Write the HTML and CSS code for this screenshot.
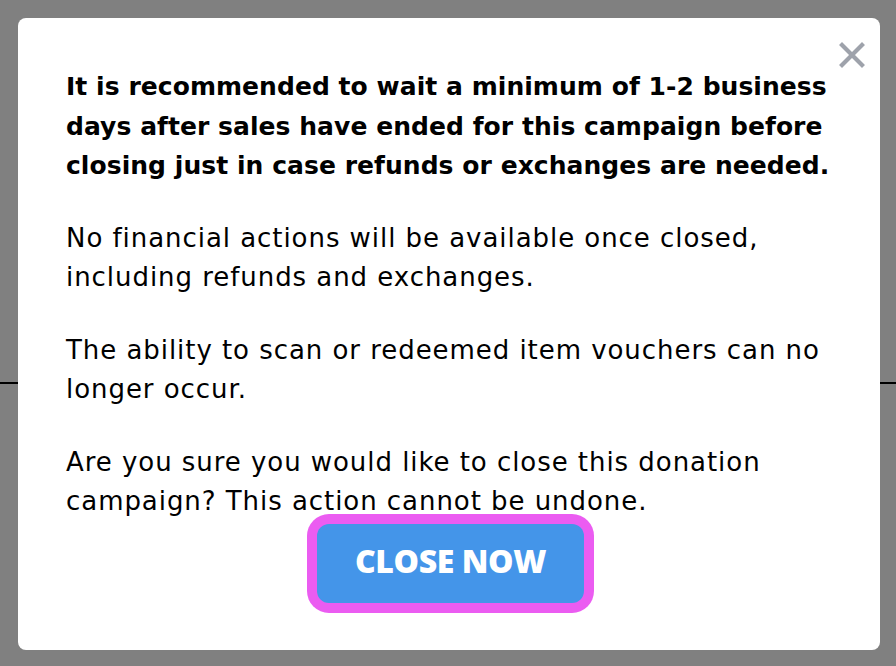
FILE: index.html
```html
<!DOCTYPE html>
<html lang="en">
<head>
  <meta charset="UTF-8" />
  <meta name="viewport" content="width=device-width, initial-scale=1.0"/>
  <title>Close Campaign</title>
  <link rel="stylesheet" href="styles.css">
</head>
<body>

  <!-- Page behind the dialog -->
  <div class="page">
    <div class="page-rule"></div>
  </div>

  <!-- Confirm dialog -->
  <div class="overlay">
    <div class="modal">
      <button class="modal-close" aria-label="Close">
        <svg width="26" height="26" viewBox="0 0 26 26">
          <path d="M3 3 L23 23 M23 3 L3 23" stroke="#9ea2ab" stroke-width="4.2" stroke-linecap="square" fill="none"/>
        </svg>
      </button>

      <p class="lead">It is recommended to wait a minimum of 1-2 business days after sales have ended for this campaign before closing just in case refunds or exchanges are needed.</p>
      <p>No financial actions will be available once closed, including refunds and exchanges.</p>
      <p>The ability to scan or redeemed item vouchers can no longer occur.</p>
      <p>Are you sure you would like to close this donation campaign? This action cannot be undone.</p>

      <div class="modal-actions">
        <button class="close-now">CLOSE NOW</button>
      </div>
    </div>
  </div>

</body>
</html>
```
FILE: styles.css
```css
body {
  margin: 0;
  background-color: #808080;
  font-family: 'DejaVu Sans', sans-serif;
  color: #000;
}

.page {
  height: 666px;
  padding-top: 382px;
  box-sizing: border-box;
}

.page-rule {
  height: 2px;
  background-color: #000;
}

.overlay {
  position: fixed;
  inset: 0;
  padding: 18px 16px 16px 18px;
}

.modal {
  position: relative;
  background-color: #fff;
  border-radius: 8px;
  height: 632px;
  box-sizing: border-box;
  padding: 49px 48px 0 48px;
}

.modal-close {
  position: absolute;
  top: 24px;
  right: 15px;
  padding: 0;
  border: none;
  background: none;
  line-height: 0;
  cursor: pointer;
}

.modal p {
  margin: 0 0 33px;
  font-size: 26px;
  line-height: 39.5px;
  letter-spacing: 0.95px;
}

.modal p.lead {
  font-weight: bold;
  font-size: 25px;
  letter-spacing: 0.05px;
}

.modal p:last-of-type {
  margin-bottom: 2px;
}

.modal-actions {
  display: flex;
  justify-content: center;
  padding-left: 3px;
}

.close-now {
  height: 79px;
  padding: 0 38px 5px;
  background-color: #4495e9;
  color: #fff;
  border: none;
  border-radius: 12px;
  box-shadow: 0 0 0 10px #eb5cf1;
  font-family: 'Open Sans', sans-serif;
  font-weight: 800;
  font-size: 32px;
  letter-spacing: -0.4px;
  cursor: pointer;
}
```
